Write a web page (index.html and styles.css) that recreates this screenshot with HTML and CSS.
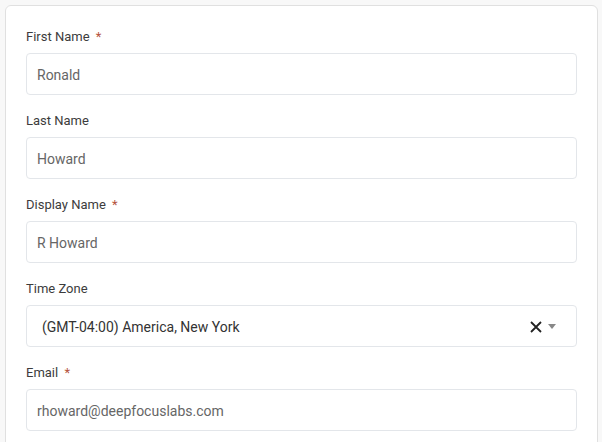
FILE: index.html
```html
<!DOCTYPE html>
<html lang="en">
<head>
    <title>Profile</title>
    <link rel="stylesheet" href="styles.css">
</head>
<body>
    <div class="card">
        <div class="field">
            <label class="label" for="firstName">First Name <span class="req">*</span></label>
            <input class="input" type="text" id="firstName" value="Ronald">
        </div>
        <div class="field">
            <label class="label" for="lastName">Last Name</label>
            <input class="input" type="text" id="lastName" value="Howard">
        </div>
        <div class="field">
            <label class="label" for="displayName">Display Name <span class="req">*</span></label>
            <input class="input" type="text" id="displayName" value="R Howard">
        </div>
        <div class="field">
            <label class="label">Time Zone</label>
            <div class="select">
                <span class="select-value">(GMT-04:00) America, New York</span>
                <svg class="clear" width="12" height="12" viewBox="0 0 12 12">
                    <path d="M1 1 L11 11 M11 1 L1 11" stroke="#222" stroke-width="1.8" fill="none"/>
                </svg>
                <span class="caret"></span>
            </div>
        </div>
        <div class="field">
            <label class="label" for="email">Email <span class="req">*</span></label>
            <input class="input" type="text" id="email" value="rhoward@deepfocuslabs.com">
        </div>
    </div>
</body>
</html>
```

FILE: styles.css
```css
html, body {
    height: 100%;
    overflow: hidden;
}
body {
    margin: 0;
    padding: 5px 4px 0 5px;
    box-sizing: border-box;
    background-color: #f8f8f8;
    font-family: Roboto, Arial, sans-serif;
    color: #333;
}
.card {
    background-color: #fff;
    border: 1px solid #e0e0e0;
    border-radius: 6px;
    padding: 20px 20px 0 20px;
    height: 460px;
}
.field {
    display: flex;
    flex-direction: column;
    margin-bottom: 15px;
}
.label {
    font-size: 13px;
    line-height: 20px;
    padding-top: 1px;
    color: #3c3c3c;
    margin-bottom: 6px;
}
.req {
    color: #b5533c;
    margin-left: 3px;
}
.input {
    box-sizing: border-box;
    height: 42px;
    border: 1px solid #e3e6ea;
    border-radius: 4px;
    padding: 2px 10px 0 10px;
    font-family: Roboto, Arial, sans-serif;
    font-size: 14px;
    color: #666;
    background-color: #fff;
    outline: none;
}
.select {
    box-sizing: border-box;
    height: 42px;
    border: 1px solid #e3e6ea;
    border-radius: 4px;
    padding: 1px 20px 0 15px;
    display: flex;
    align-items: center;
    font-size: 14px;
    color: #333;
}
.select-value {
    flex: 1;
}
.clear {
    margin-right: 6px;
}
.caret {
    width: 0;
    height: 0;
    border-left: 4px solid transparent;
    border-right: 4px solid transparent;
    border-top: 5px solid #888;
}
```
